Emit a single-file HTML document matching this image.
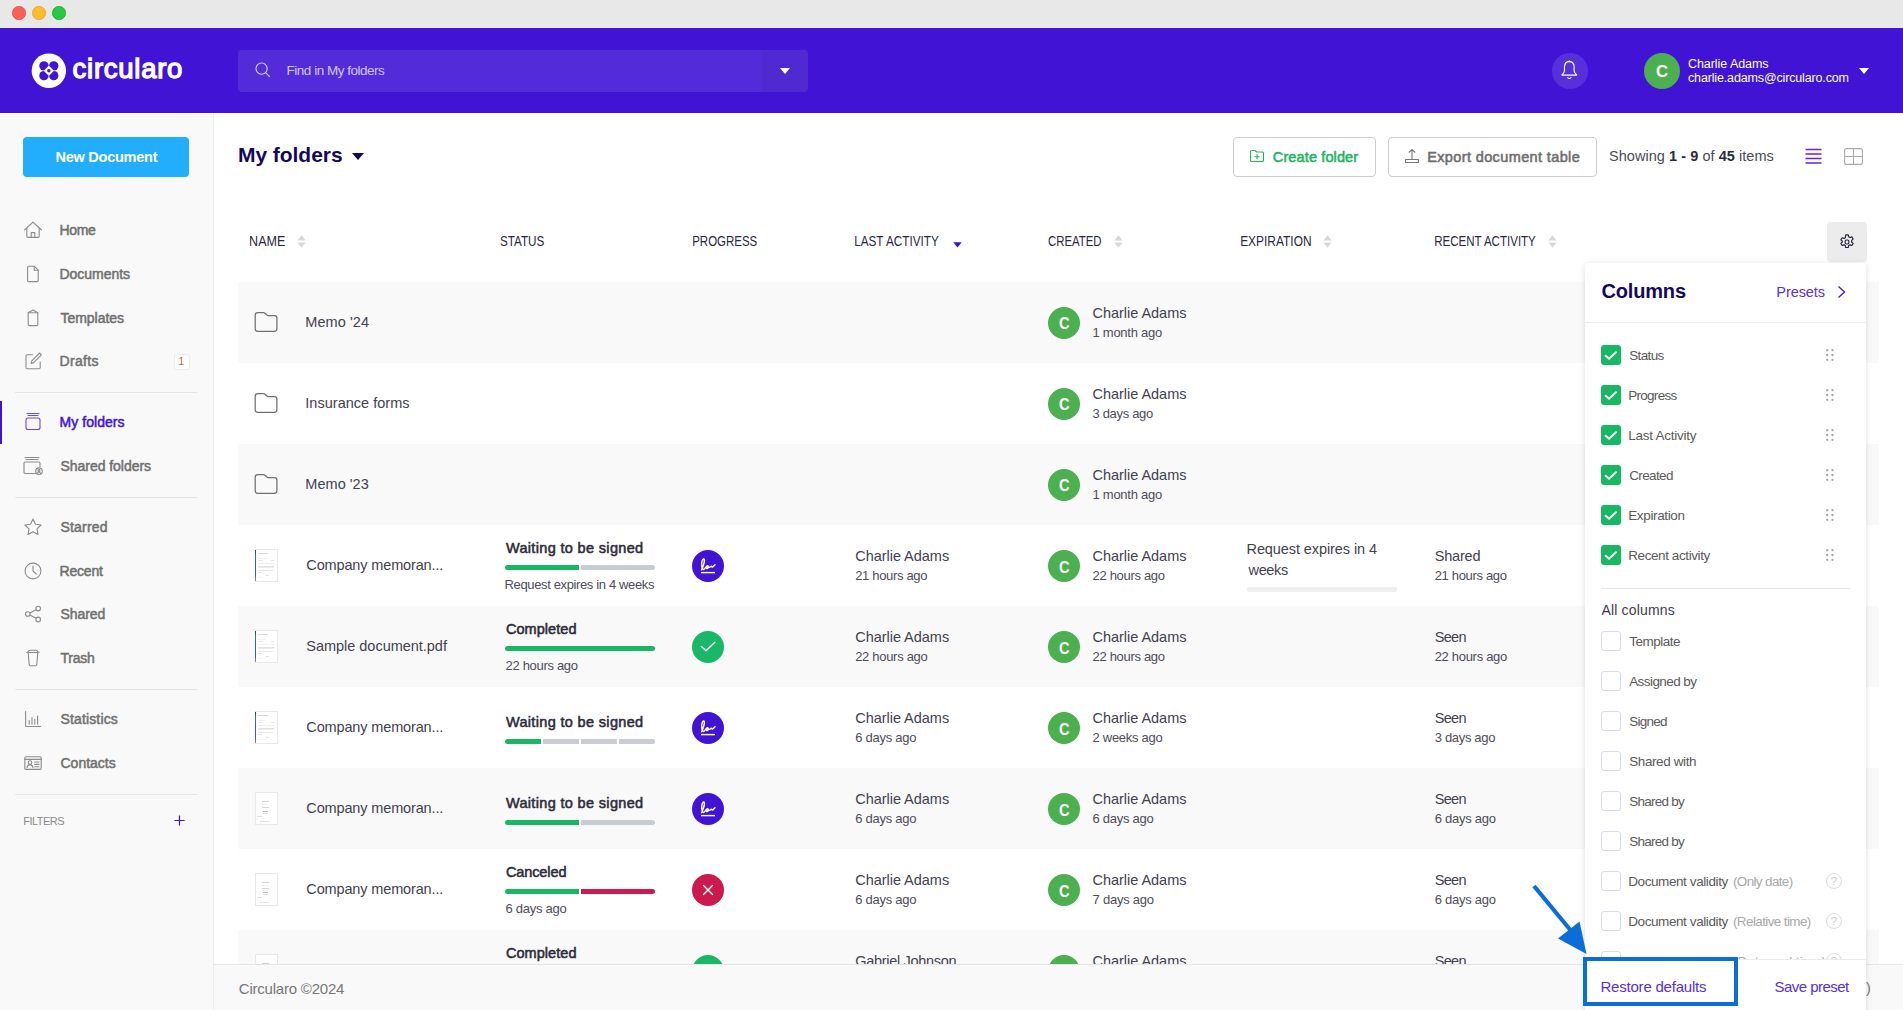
<!DOCTYPE html>
<html><head><meta charset="utf-8"><style>
html,body{margin:0;padding:0;width:1903px;height:1010px;overflow:hidden;background:#fff;}
body{position:relative;font-family:"Liberation Sans", sans-serif;}
.r{position:absolute;}
.t{position:absolute;white-space:nowrap;}
</style></head><body>
<div class="r" style="left:0px;top:0px;width:1903px;height:28px;background:#e8e8e8;"></div>
<div class="r" style="left:12.3px;top:6.1px;width:13.6px;height:13.6px;box-sizing:border-box;border:0.6px solid #e9534d;border-radius:50%;background:#fe5f57;"></div>
<div class="r" style="left:32.300000000000004px;top:6.1px;width:13.6px;height:13.6px;box-sizing:border-box;border:0.6px solid #e8aa2a;border-radius:50%;background:#febc2e;"></div>
<div class="r" style="left:52.300000000000004px;top:6.1px;width:13.6px;height:13.6px;box-sizing:border-box;border:0.6px solid #22b13a;border-radius:50%;background:#28c840;"></div>
<div class="r" style="left:0px;top:28px;width:1903px;height:85px;background:#4114d5;"></div>
<svg class="r" style="left:28px;top:50px" width="42" height="42" viewBox="28 50 42 42"><circle cx="48.85" cy="70.75" r="17.2" fill="#fff"/><g fill="#4114d5"><path d="M48.65 65.85 A4.7 4.7 0 1 0 43.95 70.55 Z"/><path d="M49.05 65.85 A4.7 4.7 0 1 1 53.75 70.55 Z"/><path d="M48.65 75.65 A4.7 4.7 0 1 1 43.95 70.95 Z"/><path d="M49.05 75.65 A4.7 4.7 0 1 0 53.75 70.95 Z"/></g><circle cx="48.85" cy="70.75" r="1.75" fill="#4114d5"/></svg>
<div class="t" style="left:72.55px;top:54.92px;font-size:27.5px;line-height:27.5px;color:#fff;font-weight:400;letter-spacing:0.735px;-webkit-text-stroke:1.3px #fff;">circularo</div>
<div class="r" style="left:238px;top:50px;width:570px;height:42px;background:rgba(255,255,255,0.10);border-radius:4px;"></div>
<div class="r" style="left:762px;top:50px;width:46px;height:42px;background:rgba(0,0,0,0.035);border-radius:0 4px 4px 0;"></div>
<svg class="r" style="left:255px;top:62px" width="16" height="16" viewBox="0 0 16 16">
<circle cx="6.6" cy="6.6" r="5.6" fill="none" stroke="#dcd0ff" stroke-width="1.1"/>
<line x1="10.6" y1="10.6" x2="14.8" y2="14.8" stroke="#dcd0ff" stroke-width="1.1"/></svg>
<div class="t" style="left:286.60px;top:63.77px;font-size:13.5px;line-height:13.5px;color:rgba(236,228,255,0.85);font-weight:400;letter-spacing:-0.493px;">Find in My folders</div>
<svg class="r" style="left:780px;top:68px" width="10" height="6" viewBox="0 0 10 6"><path d="M0 0H10L5 6Z" fill="#fff"/></svg>
<div class="r" style="left:1552px;top:53px;width:36px;height:36px;border-radius:50%;background:rgba(255,255,255,0.12);"></div>
<svg class="r" style="left:1552px;top:53px" width="36" height="36" viewBox="1552 53 36 36" fill="none" stroke="#fff" stroke-width="1.1" stroke-linejoin="round" stroke-linecap="round">
<path d="M1569.3 61.6C1566.2 61.6 1564.5 64 1564.5 67V70.8C1564.5 72.4 1563.2 73.6 1561.9 75.1H1576.7C1575.4 73.6 1574.1 72.4 1574.1 70.8V67C1574.1 64 1572.4 61.6 1569.3 61.6Z"/>
<path d="M1569.3 60.7V61.6"/><path d="M1567.6 77.7Q1569.3 79.3 1571 77.7"/></svg>
<div class="r" style="left:1644px;top:53px;width:36px;height:36px;border-radius:50%;background:#4caf50;"></div>
<div class="t" style="left:1656.10px;top:63.11px;font-size:17px;line-height:17px;color:#fff;font-weight:700;letter-spacing:0.000px;transform:scaleX(0.9833);transform-origin:0.00px 0;">C</div>
<div class="t" style="left:1688.00px;top:58.02px;font-size:12.5px;line-height:12.5px;color:#fff;font-weight:400;letter-spacing:-0.061px;">Charlie Adams</div>
<div class="t" style="left:1688.00px;top:71.62px;font-size:12.5px;line-height:12.5px;color:#fff;font-weight:400;letter-spacing:-0.147px;">charlie.adams@circularo.com</div>
<svg class="r" style="left:1859px;top:68px" width="10" height="6" viewBox="0 0 10 6"><path d="M0 0H10L5 6Z" fill="#fff"/></svg>
<div class="r" style="left:0px;top:113px;width:213px;height:897px;background:#f9f9f9;"></div>
<div class="r" style="left:213px;top:113px;width:1px;height:897px;background:#ececec;"></div>
<div class="r" style="left:23px;top:137px;width:166px;height:40px;background:#22aefd;border-radius:4px;"></div>
<div class="t" style="left:55.40px;top:149.73px;font-size:14.5px;line-height:14.5px;color:#fff;font-weight:700;letter-spacing:-0.237px;">New Document</div>
<svg class="r" style="left:23px;top:220px" width="20" height="20" viewBox="0 0 20 20" fill="none" stroke="#8c8c8c" stroke-width="1.1" stroke-linecap="round" stroke-linejoin="round"><path d="M1.5 10L10 2.2 18.5 10"/><path d="M3.8 8.2v8c0 .7.5 1.2 1.2 1.2h10c.7 0 1.2-.5 1.2-1.2v-8"/><path d="M8.2 17.4v-4.8h3.6v4.8"/></svg>
<div class="t" style="left:59.50px;top:223.15px;font-size:14px;line-height:14px;color:#707070;font-weight:400;letter-spacing:-0.353px;-webkit-text-stroke:0.5px #707070;">Home</div>
<svg class="r" style="left:23px;top:264px" width="20" height="20" viewBox="0 0 20 20" fill="none" stroke="#8c8c8c" stroke-width="1.1" stroke-linecap="round" stroke-linejoin="round"><path d="M5.8 2.2h5.4l4 4v10.2c0 .7-.5 1.2-1.2 1.2H5.8c-.7 0-1.2-.5-1.2-1.2V3.4c0-.7.5-1.2 1.2-1.2z"/><path d="M11.2 2.2v4h4"/></svg>
<div class="t" style="left:59.50px;top:267.15px;font-size:14px;line-height:14px;color:#707070;font-weight:400;letter-spacing:-0.038px;-webkit-text-stroke:0.5px #707070;">Documents</div>
<svg class="r" style="left:23px;top:308px" width="20" height="20" viewBox="0 0 20 20" fill="none" stroke="#8c8c8c" stroke-width="1.1" stroke-linecap="round" stroke-linejoin="round"><path d="M5.2 4.8L10 2l4.8 2.8v11.6c0 .7-.5 1.2-1.2 1.2H6.4c-.7 0-1.2-.5-1.2-1.2z"/><path d="M5.2 4.8h9.6"/></svg>
<div class="t" style="left:60.50px;top:311.15px;font-size:14px;line-height:14px;color:#707070;font-weight:400;letter-spacing:-0.038px;-webkit-text-stroke:0.5px #707070;">Templates</div>
<svg class="r" style="left:23px;top:351px" width="20" height="20" viewBox="0 0 20 20" fill="none" stroke="#8c8c8c" stroke-width="1.1" stroke-linecap="round" stroke-linejoin="round"><path d="M9.5 3.8H4.2c-.7 0-1.2.5-1.2 1.2v11.6c0 .7.5 1.2 1.2 1.2H16c.7 0 1.2-.5 1.2-1.2V11"/><path d="M16.6 2l1.8 1.8-7.8 7.8-2.6.8.8-2.6z"/></svg>
<div class="t" style="left:59.50px;top:354.15px;font-size:14px;line-height:14px;color:#707070;font-weight:400;letter-spacing:0.332px;-webkit-text-stroke:0.5px #707070;">Drafts</div>
<svg class="r" style="left:23px;top:412px" width="20" height="20" viewBox="0 0 20 20" fill="none" stroke="#6a45e4" stroke-width="1.1" stroke-linecap="round" stroke-linejoin="round"><rect x="3" y="6" width="14" height="11.5" rx="2"/><path d="M5 3.5h10M4 1.5h12"/></svg>
<div class="t" style="left:59.50px;top:415.15px;font-size:14px;line-height:14px;color:#4114d5;font-weight:400;letter-spacing:0.048px;-webkit-text-stroke:0.5px #4114d5;">My folders</div>
<svg class="r" style="left:23px;top:456px" width="20" height="20" viewBox="0 0 20 20" fill="none" stroke="#8c8c8c" stroke-width="1.1" stroke-linecap="round" stroke-linejoin="round"><path d="M12.5 17.5H2.2c-.7 0-1.2-.5-1.2-1.2V7.2C1 6.5 1.5 6 2.2 6h13.6c.7 0 1.2.5 1.2 1.2v3.5"/><path d="M3 3.5h12M2 1.5h14"/><circle cx="16" cy="15.2" r="3.3"/><circle cx="16" cy="14.4" r="1"/><path d="M14.2 17.4c.5-.9 1.1-1.3 1.8-1.3s1.3.4 1.8 1.3"/></svg>
<div class="t" style="left:60.50px;top:459.15px;font-size:14px;line-height:14px;color:#707070;font-weight:400;letter-spacing:-0.043px;-webkit-text-stroke:0.5px #707070;">Shared folders</div>
<svg class="r" style="left:23px;top:517px" width="20" height="20" viewBox="0 0 20 20" fill="none" stroke="#8c8c8c" stroke-width="1.1" stroke-linecap="round" stroke-linejoin="round"><path d="M10 2l2.5 5.2 5.6.8-4.1 3.9 1 5.6L10 14.8 5 17.5l1-5.6L1.9 8l5.6-.8z"/></svg>
<div class="t" style="left:60.50px;top:520.15px;font-size:14px;line-height:14px;color:#707070;font-weight:400;letter-spacing:0.179px;-webkit-text-stroke:0.5px #707070;">Starred</div>
<svg class="r" style="left:23px;top:561px" width="20" height="20" viewBox="0 0 20 20" fill="none" stroke="#8c8c8c" stroke-width="1.1" stroke-linecap="round" stroke-linejoin="round"><circle cx="10" cy="10" r="7.9"/><path d="M10 5v5l3.2 3"/></svg>
<div class="t" style="left:59.50px;top:564.15px;font-size:14px;line-height:14px;color:#707070;font-weight:400;letter-spacing:-0.194px;-webkit-text-stroke:0.5px #707070;">Recent</div>
<svg class="r" style="left:23px;top:604px" width="20" height="20" viewBox="0 0 20 20" fill="none" stroke="#8c8c8c" stroke-width="1.1" stroke-linecap="round" stroke-linejoin="round"><circle cx="15.2" cy="4.6" r="2.3"/><circle cx="15.2" cy="15.4" r="2.3"/><circle cx="4.8" cy="10" r="2.3"/><path d="M6.9 8.9l6.2-3.2M6.9 11.1l6.2 3.2"/></svg>
<div class="t" style="left:60.50px;top:607.15px;font-size:14px;line-height:14px;color:#707070;font-weight:400;letter-spacing:-0.052px;-webkit-text-stroke:0.5px #707070;">Shared</div>
<svg class="r" style="left:23px;top:648px" width="20" height="20" viewBox="0 0 20 20" fill="none" stroke="#8c8c8c" stroke-width="1.1" stroke-linecap="round" stroke-linejoin="round"><path d="M3.8 4.5h12.4"/><path d="M5 4.5c0-1.2 1-2.2 2.2-2.2h5.6c1.2 0 2.2 1 2.2 2.2"/><path d="M5.2 4.5l1 12.2c.1.6.5 1 1.1 1h5.4c.6 0 1-.4 1.1-1l1-12.2"/></svg>
<div class="t" style="left:60.50px;top:651.15px;font-size:14px;line-height:14px;color:#707070;font-weight:400;letter-spacing:-0.245px;-webkit-text-stroke:0.5px #707070;">Trash</div>
<svg class="r" style="left:23px;top:709px" width="20" height="20" viewBox="0 0 20 20" fill="none" stroke="#8c8c8c" stroke-width="1.1" stroke-linecap="round" stroke-linejoin="round"><path d="M2.6 2.5v15h15"/><path d="M6.2 15.2v-4M9 15.2V8.5M11.8 15.2v-5M14.6 15.2V7"/></svg>
<div class="t" style="left:60.50px;top:712.15px;font-size:14px;line-height:14px;color:#707070;font-weight:400;letter-spacing:0.143px;-webkit-text-stroke:0.5px #707070;">Statistics</div>
<svg class="r" style="left:23px;top:753px" width="20" height="20" viewBox="0 0 20 20" fill="none" stroke="#8c8c8c" stroke-width="1.1" stroke-linecap="round" stroke-linejoin="round"><rect x="1.8" y="3.8" width="16.4" height="12.6" rx="1.2"/><path d="M1.8 6.4h16.4"/><circle cx="7" cy="9.6" r="1.8"/><path d="M4 14.6c.4-2 1.6-3 3-3s2.6 1 3 3"/><path d="M11.6 9h4.4M11.6 11.4h4.4M11.6 13.8h4.4"/></svg>
<div class="t" style="left:60.50px;top:756.15px;font-size:14px;line-height:14px;color:#707070;font-weight:400;letter-spacing:-0.007px;-webkit-text-stroke:0.5px #707070;">Contacts</div>
<div class="r" style="left:0px;top:401px;width:2px;height:43px;background:#4114d5;"></div>
<div class="r" style="left:174px;top:354px;width:14px;height:14px;border:1px solid #ececec;border-radius:3px;background:#fff;"></div>
<div class="t" style="left:178.50px;top:357.04px;font-size:10px;line-height:10px;color:#b0623a;font-weight:400;letter-spacing:0.000px;">1</div>
<div class="r" style="left:15px;top:392px;width:182px;height:1px;background:#e6e6e6;"></div>
<div class="r" style="left:15px;top:497px;width:182px;height:1px;background:#e6e6e6;"></div>
<div class="r" style="left:15px;top:689px;width:182px;height:1px;background:#e6e6e6;"></div>
<div class="r" style="left:15px;top:794px;width:182px;height:1px;background:#e6e6e6;"></div>
<div class="t" style="left:23.20px;top:815.69px;font-size:11px;line-height:11px;color:#8a8a8a;font-weight:400;letter-spacing:-0.513px;">FILTERS</div>
<svg class="r" style="left:174px;top:815px" width="11" height="11" viewBox="0 0 11 11"><path d="M5.5 0.5v10M0.5 5.5h10" stroke="#4114d5" stroke-width="1.2"/></svg>
<div class="t" style="left:238.00px;top:144.22px;font-size:21px;line-height:21px;color:#14085e;font-weight:700;letter-spacing:-0.049px;">My folders</div>
<svg class="r" style="left:352px;top:153px" width="12" height="7" viewBox="0 0 12 7"><path d="M0 0H12L6 7Z" fill="#14085e"/></svg>
<div class="r" style="left:1233px;top:137px;width:141px;height:38px;border:1px solid #cdcdcd;border-radius:4px;"></div>
<svg class="r" style="left:1249px;top:149px" width="16" height="14" viewBox="0 0 16 14" fill="none" stroke="#23b35f" stroke-width="1.1" stroke-linejoin="round">
<path d="M1.5 2.5c0-.6.4-1 1-1h3.5l1.5 1.5h6c.6 0 1 .4 1 1v7.5c0 .6-.4 1-1 1h-11c-.6 0-1-.4-1-1z"/><path d="M8 5.2v5M5.5 7.7h5"/></svg>
<div class="t" style="left:1272.80px;top:149.73px;font-size:14.5px;line-height:14.5px;color:#23b35f;font-weight:400;letter-spacing:0.126px;-webkit-text-stroke:0.55px #23b35f;">Create folder</div>
<div class="r" style="left:1388px;top:137px;width:207px;height:38px;border:1px solid #cdcdcd;border-radius:4px;"></div>
<svg class="r" style="left:1404px;top:148px" width="16" height="16" viewBox="0 0 16 16" fill="none" stroke="#777" stroke-width="1.1" stroke-linejoin="round">
<path d="M8 11V1.5M4.8 4.5L8 1.5l3.2 3"/><path d="M1.5 11.5h13v3h-13z"/></svg>
<div class="t" style="left:1427.20px;top:149.73px;font-size:14.5px;line-height:14.5px;color:#6e6e6e;font-weight:400;letter-spacing:0.374px;-webkit-text-stroke:0.55px #6e6e6e;">Export document table</div>
<div class="t" style="left:1609.00px;top:149.33px;font-size:14.5px;line-height:14.5px;color:#4a4a58;font-weight:400;letter-spacing:0.050px;">Showing <b style="color:#2a2a3c">1 - 9</b> of <b style="color:#2a2a3c">45</b> items</div>
<svg class="r" style="left:1805px;top:148px" width="17" height="17" viewBox="0 0 17 17" stroke="#6a1fe6" stroke-width="1.6"><path d="M0.5 1.5h16M0.5 6h16M0.5 10.5h16M0.5 15h16"/></svg>
<svg class="r" style="left:1844px;top:148px" width="19" height="17" viewBox="0 0 19 17" fill="none" stroke="#aaa" stroke-width="1.1"><rect x="0.6" y="0.6" width="17.8" height="15.8" rx="2"/><path d="M9.5 0.6v15.8M0.6 8.5h17.8"/></svg>
<div class="t" style="left:249.00px;top:234.45px;font-size:14px;line-height:14px;color:#2b2740;font-weight:400;letter-spacing:0.000px;transform:scaleX(0.8949);transform-origin:1.00px 0;">NAME</div>
<svg class="r" style="left:296.5px;top:234.5px" width="9" height="13" viewBox="0 0 9 13" fill="#d9d9d9"><path d="M4.5 0.3L8.7 5.6H0.3Z"/><path d="M0.3 7.5H8.7L4.5 12.7Z"/></svg>
<div class="t" style="left:499.80px;top:234.45px;font-size:14px;line-height:14px;color:#2b2740;font-weight:400;letter-spacing:0.000px;transform:scaleX(0.8332);transform-origin:0.00px 0;">STATUS</div>
<div class="t" style="left:691.60px;top:234.45px;font-size:14px;line-height:14px;color:#2b2740;font-weight:400;letter-spacing:0.000px;transform:scaleX(0.8204);transform-origin:1.00px 0;">PROGRESS</div>
<div class="t" style="left:854.20px;top:234.45px;font-size:14px;line-height:14px;color:#2b2740;font-weight:400;letter-spacing:0.000px;transform:scaleX(0.8388);transform-origin:1.00px 0;">LAST ACTIVITY</div>
<svg class="r" style="left:952.5px;top:241.5px" width="9" height="6" viewBox="0 0 9 6"><path d="M0.3 0.3H8.7L4.5 5.6Z" fill="#3a10d5"/></svg>
<div class="t" style="left:1048.40px;top:234.45px;font-size:14px;line-height:14px;color:#2b2740;font-weight:400;letter-spacing:0.000px;transform:scaleX(0.8122);transform-origin:0.00px 0;">CREATED</div>
<svg class="r" style="left:1114.3px;top:234.5px" width="9" height="13" viewBox="0 0 9 13" fill="#d9d9d9"><path d="M4.5 0.3L8.7 5.6H0.3Z"/><path d="M0.3 7.5H8.7L4.5 12.7Z"/></svg>
<div class="t" style="left:1240.40px;top:234.45px;font-size:14px;line-height:14px;color:#2b2740;font-weight:400;letter-spacing:0.000px;transform:scaleX(0.8525);transform-origin:1.00px 0;">EXPIRATION</div>
<svg class="r" style="left:1323.2px;top:234.5px" width="9" height="13" viewBox="0 0 9 13" fill="#d9d9d9"><path d="M4.5 0.3L8.7 5.6H0.3Z"/><path d="M0.3 7.5H8.7L4.5 12.7Z"/></svg>
<div class="t" style="left:1434.00px;top:234.45px;font-size:14px;line-height:14px;color:#2b2740;font-weight:400;letter-spacing:0.000px;transform:scaleX(0.8234);transform-origin:1.00px 0;">RECENT ACTIVITY</div>
<svg class="r" style="left:1548.0px;top:234.5px" width="9" height="13" viewBox="0 0 9 13" fill="#d9d9d9"><path d="M4.5 0.3L8.7 5.6H0.3Z"/><path d="M0.3 7.5H8.7L4.5 12.7Z"/></svg>
<div class="r" style="left:1827px;top:222px;width:40px;height:40px;background:#ececec;border-radius:4px;"></div>
<svg class="r" style="left:1838px;top:233px" width="18" height="18" viewBox="0 0 24 24" fill="none" stroke="#24223a" stroke-width="1.5" stroke-linejoin="round">
<path d="M10.3 2.5h3.4l.5 2.6 1.8 1 2.5-.9 1.7 2.9-2 1.8v2.1l2 1.8-1.7 2.9-2.5-.9-1.8 1-.5 2.6h-3.4l-.5-2.6-1.8-1-2.5.9-1.7-2.9 2-1.8V11l-2-1.8 1.7-2.9 2.5.9 1.8-1z"/><rect x="9.6" y="9.4" width="4.8" height="5.2" rx="1.6"/></svg>
<div class="r" style="left:238px;top:282px;width:1641px;height:81px;background:#f9f9f9;"></div>
<div class="r" style="left:238px;top:363px;width:1641px;height:81px;background:#ffffff;"></div>
<div class="r" style="left:238px;top:444px;width:1641px;height:81px;background:#f9f9f9;"></div>
<div class="r" style="left:238px;top:525px;width:1641px;height:81px;background:#ffffff;"></div>
<div class="r" style="left:238px;top:606px;width:1641px;height:81px;background:#f9f9f9;"></div>
<div class="r" style="left:238px;top:687px;width:1641px;height:81px;background:#ffffff;"></div>
<div class="r" style="left:238px;top:768px;width:1641px;height:81px;background:#f9f9f9;"></div>
<div class="r" style="left:238px;top:849px;width:1641px;height:81px;background:#ffffff;"></div>
<div class="r" style="left:238px;top:930px;width:1641px;height:34px;background:#f9f9f9;"></div>
<svg class="r" style="left:254px;top:311px" width="24" height="22" viewBox="0 0 24 22" fill="none" stroke="#707070" stroke-width="1.25" stroke-linejoin="round">
<path d="M1.2 17.8V4Q1.2 1.5 3.7 1.5H9.5C10.8 1.5 11.4 2.2 12.2 3.3 12.9 4.2 13.4 4.7 14.5 4.7H20.4Q22.9 4.7 22.9 7.2V17.8Q22.9 20.3 20.4 20.3H3.7Q1.2 20.3 1.2 17.8Z"/></svg>
<div class="t" style="left:305.30px;top:314.83px;font-size:14.5px;line-height:14.5px;color:#43414f;font-weight:400;letter-spacing:0.065px;">Memo '24</div>
<div class="r" style="left:1048px;top:306.5px;width:32px;height:32px;border-radius:50%;background:#4caf50;"></div><div class="t" style="left:1058.90px;top:315.03px;font-size:16.5px;line-height:16.5px;color:#fff;font-weight:700;letter-spacing:0.000px;transform:scaleX(0.8833);transform-origin:0.00px 0;">C</div>
<div class="t" style="left:1092.50px;top:305.73px;font-size:14.5px;line-height:14.5px;color:#43414f;font-weight:400;letter-spacing:-0.029px;">Charlie Adams</div><div class="t" style="left:1092.50px;top:326.30px;font-size:13px;line-height:13px;color:#4e4c5a;font-weight:400;letter-spacing:-0.264px;">1 month ago</div>
<svg class="r" style="left:254px;top:392px" width="24" height="22" viewBox="0 0 24 22" fill="none" stroke="#707070" stroke-width="1.25" stroke-linejoin="round">
<path d="M1.2 17.8V4Q1.2 1.5 3.7 1.5H9.5C10.8 1.5 11.4 2.2 12.2 3.3 12.9 4.2 13.4 4.7 14.5 4.7H20.4Q22.9 4.7 22.9 7.2V17.8Q22.9 20.3 20.4 20.3H3.7Q1.2 20.3 1.2 17.8Z"/></svg>
<div class="t" style="left:305.30px;top:395.83px;font-size:14.5px;line-height:14.5px;color:#43414f;font-weight:400;letter-spacing:0.021px;">Insurance forms</div>
<div class="r" style="left:1048px;top:387.5px;width:32px;height:32px;border-radius:50%;background:#4caf50;"></div><div class="t" style="left:1058.90px;top:396.03px;font-size:16.5px;line-height:16.5px;color:#fff;font-weight:700;letter-spacing:0.000px;transform:scaleX(0.8833);transform-origin:0.00px 0;">C</div>
<div class="t" style="left:1092.50px;top:386.73px;font-size:14.5px;line-height:14.5px;color:#43414f;font-weight:400;letter-spacing:-0.029px;">Charlie Adams</div><div class="t" style="left:1092.50px;top:407.30px;font-size:13px;line-height:13px;color:#4e4c5a;font-weight:400;letter-spacing:-0.319px;">3 days ago</div>
<svg class="r" style="left:254px;top:473px" width="24" height="22" viewBox="0 0 24 22" fill="none" stroke="#707070" stroke-width="1.25" stroke-linejoin="round">
<path d="M1.2 17.8V4Q1.2 1.5 3.7 1.5H9.5C10.8 1.5 11.4 2.2 12.2 3.3 12.9 4.2 13.4 4.7 14.5 4.7H20.4Q22.9 4.7 22.9 7.2V17.8Q22.9 20.3 20.4 20.3H3.7Q1.2 20.3 1.2 17.8Z"/></svg>
<div class="t" style="left:305.30px;top:476.83px;font-size:14.5px;line-height:14.5px;color:#43414f;font-weight:400;letter-spacing:0.036px;">Memo '23</div>
<div class="r" style="left:1048px;top:468.5px;width:32px;height:32px;border-radius:50%;background:#4caf50;"></div><div class="t" style="left:1058.90px;top:477.03px;font-size:16.5px;line-height:16.5px;color:#fff;font-weight:700;letter-spacing:0.000px;transform:scaleX(0.8833);transform-origin:0.00px 0;">C</div>
<div class="t" style="left:1092.50px;top:467.73px;font-size:14.5px;line-height:14.5px;color:#43414f;font-weight:400;letter-spacing:-0.029px;">Charlie Adams</div><div class="t" style="left:1092.50px;top:488.30px;font-size:13px;line-height:13px;color:#4e4c5a;font-weight:400;letter-spacing:-0.264px;">1 month ago</div>
<div class="r" style="left:254.5px;top:549px;width:23px;height:32.5px;background:#fff;border:1px solid #e8e8e8;box-sizing:border-box;"></div><div class="r" style="left:255px;top:549.5px;width:1.3px;height:31.5px;background:linear-gradient(#3a3a3a,#2a8a6a 18%,#3a55e0 40%,#3a55e0 82%,#b88a40);"></div><div class="r" style="left:258.0px;top:553.2px;width:10px;height:1px;background:#d8d8d8;"></div><div class="r" style="left:258.0px;top:557.8px;width:8px;height:1px;background:#f0f0f0;"></div><div class="r" style="left:258.0px;top:560px;width:5px;height:1px;background:#e8e8e8;"></div><div class="r" style="left:270.5px;top:560px;width:3px;height:1px;background:#e8e8e8;"></div><div class="r" style="left:258.0px;top:562.5px;width:16px;height:1px;background:#f0f0f0;"></div><div class="r" style="left:258.0px;top:565.8px;width:16px;height:1px;background:#e2e2e2;"></div><div class="r" style="left:258.0px;top:567.2px;width:15px;height:1px;background:#ececec;"></div><div class="r" style="left:258.0px;top:569.8px;width:15px;height:1px;background:#e8e8e8;"></div><div class="r" style="left:258.0px;top:572px;width:4px;height:1px;background:#e4e4e4;"></div><div class="r" style="left:265.5px;top:575.2px;width:3px;height:1px;background:#e4e4e4;"></div><div class="r" style="left:258.0px;top:576.5px;width:3px;height:1px;background:#f0f0f0;"></div>
<div class="t" style="left:306.30px;top:557.83px;font-size:14.5px;line-height:14.5px;color:#43414f;font-weight:400;letter-spacing:-0.140px;">Company memoran...</div>
<div class="t" style="left:505.90px;top:541.23px;font-size:14.5px;line-height:14.5px;color:#2e2c3b;font-weight:400;letter-spacing:0.338px;-webkit-text-stroke:0.55px #2e2c3b;">Waiting to be signed</div>
<div class="r" style="left:505.0px;top:565px;width:74.0px;height:5px;background:#19b664;border-radius:3px 0 0 3px;"></div><div class="r" style="left:581.0px;top:565px;width:74.0px;height:5px;background:#c9ccd1;border-radius:0 3px 3px 0;"></div>
<div class="t" style="left:504.50px;top:578.00px;font-size:13px;line-height:13px;color:#4e4c5a;font-weight:400;letter-spacing:-0.363px;">Request expires in 4 weeks</div>
<div class="r" style="left:692px;top:550px;width:32px;height:32px;border-radius:50%;background:#4114d5;"></div><svg class="r" style="left:692px;top:550px" width="32" height="32" viewBox="0 0 32 32" fill="none" stroke="#fff" stroke-width="1.45" stroke-linecap="round" stroke-linejoin="round">
<path d="M9.6 19.8C10.6 17.5 12.4 13 12.4 10.4 12.4 8.8 11.4 8.6 10.8 9.6 9.8 11.2 9.6 15.5 10.2 18 10.6 19.6 11.6 19.8 12.6 18.8 13.6 17.6 14.4 15.6 15.6 15.8 16.8 16 16.4 18.4 15.2 18.6 14.2 18.8 14.6 17.2 15.8 17.2 17 17.2 17.6 17.6 18.4 17 19 16.6 19.2 15.8 19.6 16.4 20 17 20.4 17.4 21.2 16.6L23 14.8"/>
<path d="M9 22.6H23" stroke-width="1.4" stroke-linecap="butt"/></svg>
<div class="t" style="left:855.20px;top:548.73px;font-size:14.5px;line-height:14.5px;color:#43414f;font-weight:400;letter-spacing:-0.029px;">Charlie Adams</div><div class="t" style="left:855.20px;top:569.30px;font-size:13px;line-height:13px;color:#4e4c5a;font-weight:400;letter-spacing:-0.333px;">21 hours ago</div>
<div class="r" style="left:1048px;top:550px;width:32px;height:32px;border-radius:50%;background:#4caf50;"></div><div class="t" style="left:1058.90px;top:558.53px;font-size:16.5px;line-height:16.5px;color:#fff;font-weight:700;letter-spacing:0.000px;transform:scaleX(0.8833);transform-origin:0.00px 0;">C</div>
<div class="t" style="left:1092.50px;top:548.73px;font-size:14.5px;line-height:14.5px;color:#43414f;font-weight:400;letter-spacing:-0.029px;">Charlie Adams</div><div class="t" style="left:1092.50px;top:569.30px;font-size:13px;line-height:13px;color:#4e4c5a;font-weight:400;letter-spacing:-0.306px;">22 hours ago</div>
<div class="t" style="left:1434.70px;top:548.73px;font-size:14.5px;line-height:14.5px;color:#43414f;font-weight:400;letter-spacing:-0.179px;">Shared</div><div class="t" style="left:1434.70px;top:569.30px;font-size:13px;line-height:13px;color:#4e4c5a;font-weight:400;letter-spacing:-0.333px;">21 hours ago</div>
<div class="t" style="left:1246.50px;top:541.93px;font-size:14.5px;line-height:14.5px;color:#43414f;font-weight:400;letter-spacing:-0.085px;">Request expires in 4</div>
<div class="t" style="left:1248.50px;top:562.53px;font-size:14.5px;line-height:14.5px;color:#43414f;font-weight:400;letter-spacing:-0.337px;">weeks</div>
<div class="r" style="left:1247px;top:587px;width:150px;height:4.5px;background:#efefef;border-radius:2px;"></div>
<div class="r" style="left:254.5px;top:630px;width:23px;height:32.5px;background:#fff;border:1px solid #e8e8e8;box-sizing:border-box;"></div><div class="r" style="left:255px;top:630.5px;width:1.3px;height:31.5px;background:linear-gradient(#3a3a3a,#2a8a6a 18%,#3a55e0 40%,#3a55e0 82%,#b88a40);"></div><div class="r" style="left:258.0px;top:634.2px;width:10px;height:1px;background:#d8d8d8;"></div><div class="r" style="left:258.0px;top:638.8px;width:8px;height:1px;background:#f0f0f0;"></div><div class="r" style="left:258.0px;top:641px;width:5px;height:1px;background:#e8e8e8;"></div><div class="r" style="left:270.5px;top:641px;width:3px;height:1px;background:#e8e8e8;"></div><div class="r" style="left:258.0px;top:643.5px;width:16px;height:1px;background:#f0f0f0;"></div><div class="r" style="left:258.0px;top:646.8px;width:16px;height:1px;background:#e2e2e2;"></div><div class="r" style="left:258.0px;top:648.2px;width:15px;height:1px;background:#ececec;"></div><div class="r" style="left:258.0px;top:650.8px;width:15px;height:1px;background:#e8e8e8;"></div><div class="r" style="left:258.0px;top:653px;width:4px;height:1px;background:#e4e4e4;"></div><div class="r" style="left:265.5px;top:656.2px;width:3px;height:1px;background:#e4e4e4;"></div><div class="r" style="left:258.0px;top:657.5px;width:3px;height:1px;background:#f0f0f0;"></div>
<div class="t" style="left:306.30px;top:638.83px;font-size:14.5px;line-height:14.5px;color:#43414f;font-weight:400;letter-spacing:-0.024px;">Sample document.pdf</div>
<div class="t" style="left:505.90px;top:622.23px;font-size:14.5px;line-height:14.5px;color:#2e2c3b;font-weight:400;letter-spacing:0.055px;-webkit-text-stroke:0.55px #2e2c3b;">Completed</div>
<div class="r" style="left:505.0px;top:646px;width:150.0px;height:5px;background:#19b664;border-radius:3px;"></div>
<div class="t" style="left:505.50px;top:659.00px;font-size:13px;line-height:13px;color:#4e4c5a;font-weight:400;letter-spacing:-0.306px;">22 hours ago</div>
<div class="r" style="left:692px;top:631px;width:32px;height:32px;border-radius:50%;background:#19b866;"></div><svg class="r" style="left:698px;top:637px" width="20" height="20" viewBox="0 0 20 20" fill="none" stroke="#fff" stroke-width="1.4" stroke-linecap="round" stroke-linejoin="round"><path d="M3.4 9.4L8 13.7 16.9 5.2"/></svg>
<div class="t" style="left:855.20px;top:629.73px;font-size:14.5px;line-height:14.5px;color:#43414f;font-weight:400;letter-spacing:-0.029px;">Charlie Adams</div><div class="t" style="left:855.20px;top:650.30px;font-size:13px;line-height:13px;color:#4e4c5a;font-weight:400;letter-spacing:-0.306px;">22 hours ago</div>
<div class="r" style="left:1048px;top:631px;width:32px;height:32px;border-radius:50%;background:#4caf50;"></div><div class="t" style="left:1058.90px;top:639.53px;font-size:16.5px;line-height:16.5px;color:#fff;font-weight:700;letter-spacing:0.000px;transform:scaleX(0.8833);transform-origin:0.00px 0;">C</div>
<div class="t" style="left:1092.50px;top:629.73px;font-size:14.5px;line-height:14.5px;color:#43414f;font-weight:400;letter-spacing:-0.029px;">Charlie Adams</div><div class="t" style="left:1092.50px;top:650.30px;font-size:13px;line-height:13px;color:#4e4c5a;font-weight:400;letter-spacing:-0.306px;">22 hours ago</div>
<div class="t" style="left:1434.70px;top:629.73px;font-size:14.5px;line-height:14.5px;color:#43414f;font-weight:400;letter-spacing:-0.700px;">Seen</div><div class="t" style="left:1434.70px;top:650.30px;font-size:13px;line-height:13px;color:#4e4c5a;font-weight:400;letter-spacing:-0.306px;">22 hours ago</div>
<div class="r" style="left:254.5px;top:711px;width:23px;height:32.5px;background:#fff;border:1px solid #e8e8e8;box-sizing:border-box;"></div><div class="r" style="left:255px;top:711.5px;width:1.3px;height:31.5px;background:linear-gradient(#3a3a3a,#2a8a6a 18%,#3a55e0 40%,#3a55e0 82%,#b88a40);"></div><div class="r" style="left:258.0px;top:715.2px;width:10px;height:1px;background:#d8d8d8;"></div><div class="r" style="left:258.0px;top:719.8px;width:8px;height:1px;background:#f0f0f0;"></div><div class="r" style="left:258.0px;top:722px;width:5px;height:1px;background:#e8e8e8;"></div><div class="r" style="left:270.5px;top:722px;width:3px;height:1px;background:#e8e8e8;"></div><div class="r" style="left:258.0px;top:724.5px;width:16px;height:1px;background:#f0f0f0;"></div><div class="r" style="left:258.0px;top:727.8px;width:16px;height:1px;background:#e2e2e2;"></div><div class="r" style="left:258.0px;top:729.2px;width:15px;height:1px;background:#ececec;"></div><div class="r" style="left:258.0px;top:731.8px;width:15px;height:1px;background:#e8e8e8;"></div><div class="r" style="left:258.0px;top:734px;width:4px;height:1px;background:#e4e4e4;"></div><div class="r" style="left:265.5px;top:737.2px;width:3px;height:1px;background:#e4e4e4;"></div><div class="r" style="left:258.0px;top:738.5px;width:3px;height:1px;background:#f0f0f0;"></div>
<div class="t" style="left:306.30px;top:719.83px;font-size:14.5px;line-height:14.5px;color:#43414f;font-weight:400;letter-spacing:-0.140px;">Company memoran...</div>
<div class="t" style="left:505.90px;top:714.73px;font-size:14.5px;line-height:14.5px;color:#2e2c3b;font-weight:400;letter-spacing:0.338px;-webkit-text-stroke:0.55px #2e2c3b;">Waiting to be signed</div>
<div class="r" style="left:505.0px;top:738.5px;width:36.0px;height:5px;background:#19b664;border-radius:3px 0 0 3px;"></div><div class="r" style="left:543.0px;top:738.5px;width:36.0px;height:5px;background:#c9ccd1;"></div><div class="r" style="left:581.0px;top:738.5px;width:36.0px;height:5px;background:#c9ccd1;"></div><div class="r" style="left:619.0px;top:738.5px;width:36.0px;height:5px;background:#c9ccd1;border-radius:0 3px 3px 0;"></div>
<div class="r" style="left:692px;top:712px;width:32px;height:32px;border-radius:50%;background:#4114d5;"></div><svg class="r" style="left:692px;top:712px" width="32" height="32" viewBox="0 0 32 32" fill="none" stroke="#fff" stroke-width="1.45" stroke-linecap="round" stroke-linejoin="round">
<path d="M9.6 19.8C10.6 17.5 12.4 13 12.4 10.4 12.4 8.8 11.4 8.6 10.8 9.6 9.8 11.2 9.6 15.5 10.2 18 10.6 19.6 11.6 19.8 12.6 18.8 13.6 17.6 14.4 15.6 15.6 15.8 16.8 16 16.4 18.4 15.2 18.6 14.2 18.8 14.6 17.2 15.8 17.2 17 17.2 17.6 17.6 18.4 17 19 16.6 19.2 15.8 19.6 16.4 20 17 20.4 17.4 21.2 16.6L23 14.8"/>
<path d="M9 22.6H23" stroke-width="1.4" stroke-linecap="butt"/></svg>
<div class="t" style="left:855.20px;top:710.73px;font-size:14.5px;line-height:14.5px;color:#43414f;font-weight:400;letter-spacing:-0.029px;">Charlie Adams</div><div class="t" style="left:855.20px;top:731.30px;font-size:13px;line-height:13px;color:#4e4c5a;font-weight:400;letter-spacing:-0.264px;">6 days ago</div>
<div class="r" style="left:1048px;top:712px;width:32px;height:32px;border-radius:50%;background:#4caf50;"></div><div class="t" style="left:1058.90px;top:720.53px;font-size:16.5px;line-height:16.5px;color:#fff;font-weight:700;letter-spacing:0.000px;transform:scaleX(0.8833);transform-origin:0.00px 0;">C</div>
<div class="t" style="left:1092.50px;top:710.73px;font-size:14.5px;line-height:14.5px;color:#43414f;font-weight:400;letter-spacing:-0.029px;">Charlie Adams</div><div class="t" style="left:1092.50px;top:731.30px;font-size:13px;line-height:13px;color:#4e4c5a;font-weight:400;letter-spacing:-0.276px;">2 weeks ago</div>
<div class="t" style="left:1434.70px;top:710.73px;font-size:14.5px;line-height:14.5px;color:#43414f;font-weight:400;letter-spacing:-0.700px;">Seen</div><div class="t" style="left:1434.70px;top:731.30px;font-size:13px;line-height:13px;color:#4e4c5a;font-weight:400;letter-spacing:-0.319px;">3 days ago</div>
<div class="r" style="left:254.5px;top:792px;width:23px;height:32.5px;background:#fff;border:1px solid #e8e8e8;box-sizing:border-box;"></div><div class="r" style="left:261.5px;top:801px;width:7.5px;height:1px;background:#d2d2d2;"></div><div class="r" style="left:262.0px;top:804px;width:6px;height:1px;background:#efefef;"></div><div class="r" style="left:261.5px;top:807px;width:7px;height:1px;background:#d6d6d6;"></div><div class="r" style="left:263.0px;top:811px;width:5px;height:1px;background:#bdbdbd;"></div><div class="r" style="left:263.0px;top:813.2px;width:5px;height:1px;background:#dedede;"></div><div class="r" style="left:257.0px;top:816px;width:5px;height:1px;background:#e2e2e2;"></div><div class="r" style="left:260.0px;top:821px;width:9px;height:1px;background:#e2e2e2;"></div>
<div class="t" style="left:306.30px;top:800.83px;font-size:14.5px;line-height:14.5px;color:#43414f;font-weight:400;letter-spacing:-0.140px;">Company memoran...</div>
<div class="t" style="left:505.90px;top:795.73px;font-size:14.5px;line-height:14.5px;color:#2e2c3b;font-weight:400;letter-spacing:0.338px;-webkit-text-stroke:0.55px #2e2c3b;">Waiting to be signed</div>
<div class="r" style="left:505.0px;top:819.5px;width:74.0px;height:5px;background:#19b664;border-radius:3px 0 0 3px;"></div><div class="r" style="left:581.0px;top:819.5px;width:74.0px;height:5px;background:#c9ccd1;border-radius:0 3px 3px 0;"></div>
<div class="r" style="left:692px;top:793px;width:32px;height:32px;border-radius:50%;background:#4114d5;"></div><svg class="r" style="left:692px;top:793px" width="32" height="32" viewBox="0 0 32 32" fill="none" stroke="#fff" stroke-width="1.45" stroke-linecap="round" stroke-linejoin="round">
<path d="M9.6 19.8C10.6 17.5 12.4 13 12.4 10.4 12.4 8.8 11.4 8.6 10.8 9.6 9.8 11.2 9.6 15.5 10.2 18 10.6 19.6 11.6 19.8 12.6 18.8 13.6 17.6 14.4 15.6 15.6 15.8 16.8 16 16.4 18.4 15.2 18.6 14.2 18.8 14.6 17.2 15.8 17.2 17 17.2 17.6 17.6 18.4 17 19 16.6 19.2 15.8 19.6 16.4 20 17 20.4 17.4 21.2 16.6L23 14.8"/>
<path d="M9 22.6H23" stroke-width="1.4" stroke-linecap="butt"/></svg>
<div class="t" style="left:855.20px;top:791.73px;font-size:14.5px;line-height:14.5px;color:#43414f;font-weight:400;letter-spacing:-0.029px;">Charlie Adams</div><div class="t" style="left:855.20px;top:812.30px;font-size:13px;line-height:13px;color:#4e4c5a;font-weight:400;letter-spacing:-0.264px;">6 days ago</div>
<div class="r" style="left:1048px;top:793px;width:32px;height:32px;border-radius:50%;background:#4caf50;"></div><div class="t" style="left:1058.90px;top:801.53px;font-size:16.5px;line-height:16.5px;color:#fff;font-weight:700;letter-spacing:0.000px;transform:scaleX(0.8833);transform-origin:0.00px 0;">C</div>
<div class="t" style="left:1092.50px;top:791.73px;font-size:14.5px;line-height:14.5px;color:#43414f;font-weight:400;letter-spacing:-0.029px;">Charlie Adams</div><div class="t" style="left:1092.50px;top:812.30px;font-size:13px;line-height:13px;color:#4e4c5a;font-weight:400;letter-spacing:-0.264px;">6 days ago</div>
<div class="t" style="left:1434.70px;top:791.73px;font-size:14.5px;line-height:14.5px;color:#43414f;font-weight:400;letter-spacing:-0.700px;">Seen</div><div class="t" style="left:1434.70px;top:812.30px;font-size:13px;line-height:13px;color:#4e4c5a;font-weight:400;letter-spacing:-0.264px;">6 days ago</div>
<div class="r" style="left:254.5px;top:873px;width:23px;height:32.5px;background:#fff;border:1px solid #e8e8e8;box-sizing:border-box;"></div><div class="r" style="left:261.5px;top:882px;width:7.5px;height:1px;background:#d2d2d2;"></div><div class="r" style="left:262.0px;top:885px;width:6px;height:1px;background:#efefef;"></div><div class="r" style="left:261.5px;top:888px;width:7px;height:1px;background:#d6d6d6;"></div><div class="r" style="left:263.0px;top:892px;width:5px;height:1px;background:#bdbdbd;"></div><div class="r" style="left:263.0px;top:894.2px;width:5px;height:1px;background:#dedede;"></div><div class="r" style="left:257.0px;top:897px;width:5px;height:1px;background:#e2e2e2;"></div><div class="r" style="left:260.0px;top:902px;width:9px;height:1px;background:#e2e2e2;"></div>
<div class="t" style="left:306.30px;top:881.83px;font-size:14.5px;line-height:14.5px;color:#43414f;font-weight:400;letter-spacing:-0.140px;">Company memoran...</div>
<div class="t" style="left:505.90px;top:865.23px;font-size:14.5px;line-height:14.5px;color:#2e2c3b;font-weight:400;letter-spacing:-0.100px;-webkit-text-stroke:0.55px #2e2c3b;">Canceled</div>
<div class="r" style="left:505.0px;top:889px;width:74.0px;height:5px;background:#19b664;border-radius:3px 0 0 3px;"></div><div class="r" style="left:581.0px;top:889px;width:74.0px;height:5px;background:#cc1a4f;border-radius:0 3px 3px 0;"></div>
<div class="t" style="left:505.50px;top:902.00px;font-size:13px;line-height:13px;color:#4e4c5a;font-weight:400;letter-spacing:-0.264px;">6 days ago</div>
<div class="r" style="left:692px;top:874px;width:32px;height:32px;border-radius:50%;background:#cc1a4f;"></div><svg class="r" style="left:698px;top:880px" width="20" height="20" viewBox="0 0 20 20" fill="none" stroke="#fff" stroke-width="1.4" stroke-linecap="round"><path d="M5.5 5.5l9 9M14.5 5.5l-9 9"/></svg>
<div class="t" style="left:855.20px;top:872.73px;font-size:14.5px;line-height:14.5px;color:#43414f;font-weight:400;letter-spacing:-0.029px;">Charlie Adams</div><div class="t" style="left:855.20px;top:893.30px;font-size:13px;line-height:13px;color:#4e4c5a;font-weight:400;letter-spacing:-0.264px;">6 days ago</div>
<div class="r" style="left:1048px;top:874px;width:32px;height:32px;border-radius:50%;background:#4caf50;"></div><div class="t" style="left:1058.90px;top:882.53px;font-size:16.5px;line-height:16.5px;color:#fff;font-weight:700;letter-spacing:0.000px;transform:scaleX(0.8833);transform-origin:0.00px 0;">C</div>
<div class="t" style="left:1092.50px;top:872.73px;font-size:14.5px;line-height:14.5px;color:#43414f;font-weight:400;letter-spacing:-0.029px;">Charlie Adams</div><div class="t" style="left:1092.50px;top:893.30px;font-size:13px;line-height:13px;color:#4e4c5a;font-weight:400;letter-spacing:-0.230px;">7 days ago</div>
<div class="t" style="left:1434.70px;top:872.73px;font-size:14.5px;line-height:14.5px;color:#43414f;font-weight:400;letter-spacing:-0.700px;">Seen</div><div class="t" style="left:1434.70px;top:893.30px;font-size:13px;line-height:13px;color:#4e4c5a;font-weight:400;letter-spacing:-0.264px;">6 days ago</div>
<div class="r" style="left:254.5px;top:954px;width:23px;height:32.5px;background:#fff;border:1px solid #e8e8e8;box-sizing:border-box;"></div><div class="r" style="left:261.5px;top:963px;width:7.5px;height:1px;background:#d2d2d2;"></div><div class="r" style="left:262.0px;top:966px;width:6px;height:1px;background:#efefef;"></div><div class="r" style="left:261.5px;top:969px;width:7px;height:1px;background:#d6d6d6;"></div><div class="r" style="left:263.0px;top:973px;width:5px;height:1px;background:#bdbdbd;"></div><div class="r" style="left:263.0px;top:975.2px;width:5px;height:1px;background:#dedede;"></div><div class="r" style="left:257.0px;top:978px;width:5px;height:1px;background:#e2e2e2;"></div><div class="r" style="left:260.0px;top:983px;width:9px;height:1px;background:#e2e2e2;"></div>
<div class="t" style="left:505.90px;top:946.23px;font-size:14.5px;line-height:14.5px;color:#2e2c3b;font-weight:400;letter-spacing:0.055px;-webkit-text-stroke:0.55px #2e2c3b;">Completed</div>
<div class="r" style="left:505.0px;top:970px;width:150.0px;height:5px;background:#19b664;border-radius:3px;"></div>
<div class="r" style="left:692px;top:955px;width:32px;height:32px;border-radius:50%;background:#19b866;"></div><svg class="r" style="left:698px;top:961px" width="20" height="20" viewBox="0 0 20 20" fill="none" stroke="#fff" stroke-width="1.4" stroke-linecap="round" stroke-linejoin="round"><path d="M3.4 9.4L8 13.7 16.9 5.2"/></svg>
<div class="t" style="left:855.20px;top:953.73px;font-size:14.5px;line-height:14.5px;color:#43414f;font-weight:400;letter-spacing:-0.302px;">Gabriel Johnson</div>
<div class="r" style="left:1048px;top:955px;width:32px;height:32px;border-radius:50%;background:#4caf50;"></div><div class="t" style="left:1058.90px;top:963.53px;font-size:16.5px;line-height:16.5px;color:#fff;font-weight:700;letter-spacing:0.000px;transform:scaleX(0.8833);transform-origin:0.00px 0;">C</div>
<div class="t" style="left:1092.50px;top:953.73px;font-size:14.5px;line-height:14.5px;color:#43414f;font-weight:400;letter-spacing:-0.029px;">Charlie Adams</div>
<div class="t" style="left:1434.70px;top:953.73px;font-size:14.5px;line-height:14.5px;color:#43414f;font-weight:400;letter-spacing:-0.700px;">Seen</div>
<div class="r" style="left:214px;top:964px;width:1689px;height:46px;background:#f9f9f9;"></div>
<div class="r" style="left:214px;top:963.5px;width:1689px;height:1px;background:#e6e6e6;"></div>
<div class="t" style="left:238.80px;top:981.40px;font-size:15px;line-height:15px;color:#777;font-weight:400;letter-spacing:-0.212px;">Circularo ©2024</div>
<div class="t" style="left:1866.00px;top:980.73px;font-size:14.5px;line-height:14.5px;color:#777;font-weight:400;letter-spacing:0.000px;">)</div>
<div class="r" style="left:1585px;top:263px;width:281px;height:760px;background:#fff;border-radius:4px;box-shadow:0 1px 6px rgba(0,0,0,0.13);"></div>
<div class="t" style="left:1601.40px;top:280.77px;font-size:20px;line-height:20px;color:#14085e;font-weight:700;letter-spacing:-0.156px;">Columns</div>
<div class="t" style="left:1776.30px;top:284.73px;font-size:14.5px;line-height:14.5px;color:#5530e0;font-weight:400;letter-spacing:-0.068px;">Presets</div>
<svg class="r" style="left:1837px;top:285px" width="9" height="14" viewBox="0 0 9 14" fill="none" stroke="#4114d5" stroke-width="1.3"><path d="M1.5 1.5L7.5 7l-6 5.5"/></svg>
<div class="r" style="left:1585px;top:322px;width:281px;height:1px;background:#ebebeb;"></div>
<div class="r" style="left:1601px;top:345px;width:20px;height:20px;background:#19b664;border-radius:3px;"></div>
<svg class="r" style="left:1601px;top:345px" width="20" height="20" viewBox="0 0 20 20" fill="none" stroke="#fff" stroke-width="1.9" stroke-linecap="round" stroke-linejoin="round"><path d="M4.6 10.8l3.4 3 7-6.6"/></svg>
<div class="t" style="left:1629.20px;top:348.97px;font-size:13.5px;line-height:13.5px;color:#5a5a5a;font-weight:400;letter-spacing:-0.644px;">Status</div>
<svg class="r" style="left:1826px;top:349px" width="8" height="12" viewBox="0 0 8 12" fill="#a2a2a2"><circle cx="1.2" cy="1.2" r="1.15"/><circle cx="6.4" cy="1.2" r="1.15"/><circle cx="1.2" cy="6" r="1.15"/><circle cx="6.4" cy="6" r="1.15"/><circle cx="1.2" cy="10.8" r="1.15"/><circle cx="6.4" cy="10.8" r="1.15"/></svg>
<div class="r" style="left:1601px;top:385px;width:20px;height:20px;background:#19b664;border-radius:3px;"></div>
<svg class="r" style="left:1601px;top:385px" width="20" height="20" viewBox="0 0 20 20" fill="none" stroke="#fff" stroke-width="1.9" stroke-linecap="round" stroke-linejoin="round"><path d="M4.6 10.8l3.4 3 7-6.6"/></svg>
<div class="t" style="left:1628.20px;top:388.97px;font-size:13.5px;line-height:13.5px;color:#5a5a5a;font-weight:400;letter-spacing:-0.710px;">Progress</div>
<svg class="r" style="left:1826px;top:389px" width="8" height="12" viewBox="0 0 8 12" fill="#a2a2a2"><circle cx="1.2" cy="1.2" r="1.15"/><circle cx="6.4" cy="1.2" r="1.15"/><circle cx="1.2" cy="6" r="1.15"/><circle cx="6.4" cy="6" r="1.15"/><circle cx="1.2" cy="10.8" r="1.15"/><circle cx="6.4" cy="10.8" r="1.15"/></svg>
<div class="r" style="left:1601px;top:425px;width:20px;height:20px;background:#19b664;border-radius:3px;"></div>
<svg class="r" style="left:1601px;top:425px" width="20" height="20" viewBox="0 0 20 20" fill="none" stroke="#fff" stroke-width="1.9" stroke-linecap="round" stroke-linejoin="round"><path d="M4.6 10.8l3.4 3 7-6.6"/></svg>
<div class="t" style="left:1628.20px;top:428.97px;font-size:13.5px;line-height:13.5px;color:#5a5a5a;font-weight:400;letter-spacing:-0.248px;">Last Activity</div>
<svg class="r" style="left:1826px;top:429px" width="8" height="12" viewBox="0 0 8 12" fill="#a2a2a2"><circle cx="1.2" cy="1.2" r="1.15"/><circle cx="6.4" cy="1.2" r="1.15"/><circle cx="1.2" cy="6" r="1.15"/><circle cx="6.4" cy="6" r="1.15"/><circle cx="1.2" cy="10.8" r="1.15"/><circle cx="6.4" cy="10.8" r="1.15"/></svg>
<div class="r" style="left:1601px;top:465px;width:20px;height:20px;background:#19b664;border-radius:3px;"></div>
<svg class="r" style="left:1601px;top:465px" width="20" height="20" viewBox="0 0 20 20" fill="none" stroke="#fff" stroke-width="1.9" stroke-linecap="round" stroke-linejoin="round"><path d="M4.6 10.8l3.4 3 7-6.6"/></svg>
<div class="t" style="left:1629.20px;top:468.97px;font-size:13.5px;line-height:13.5px;color:#5a5a5a;font-weight:400;letter-spacing:-0.637px;">Created</div>
<svg class="r" style="left:1826px;top:469px" width="8" height="12" viewBox="0 0 8 12" fill="#a2a2a2"><circle cx="1.2" cy="1.2" r="1.15"/><circle cx="6.4" cy="1.2" r="1.15"/><circle cx="1.2" cy="6" r="1.15"/><circle cx="6.4" cy="6" r="1.15"/><circle cx="1.2" cy="10.8" r="1.15"/><circle cx="6.4" cy="10.8" r="1.15"/></svg>
<div class="r" style="left:1601px;top:505px;width:20px;height:20px;background:#19b664;border-radius:3px;"></div>
<svg class="r" style="left:1601px;top:505px" width="20" height="20" viewBox="0 0 20 20" fill="none" stroke="#fff" stroke-width="1.9" stroke-linecap="round" stroke-linejoin="round"><path d="M4.6 10.8l3.4 3 7-6.6"/></svg>
<div class="t" style="left:1628.20px;top:508.97px;font-size:13.5px;line-height:13.5px;color:#5a5a5a;font-weight:400;letter-spacing:-0.358px;">Expiration</div>
<svg class="r" style="left:1826px;top:509px" width="8" height="12" viewBox="0 0 8 12" fill="#a2a2a2"><circle cx="1.2" cy="1.2" r="1.15"/><circle cx="6.4" cy="1.2" r="1.15"/><circle cx="1.2" cy="6" r="1.15"/><circle cx="6.4" cy="6" r="1.15"/><circle cx="1.2" cy="10.8" r="1.15"/><circle cx="6.4" cy="10.8" r="1.15"/></svg>
<div class="r" style="left:1601px;top:545px;width:20px;height:20px;background:#19b664;border-radius:3px;"></div>
<svg class="r" style="left:1601px;top:545px" width="20" height="20" viewBox="0 0 20 20" fill="none" stroke="#fff" stroke-width="1.9" stroke-linecap="round" stroke-linejoin="round"><path d="M4.6 10.8l3.4 3 7-6.6"/></svg>
<div class="t" style="left:1628.20px;top:548.97px;font-size:13.5px;line-height:13.5px;color:#5a5a5a;font-weight:400;letter-spacing:-0.409px;">Recent activity</div>
<svg class="r" style="left:1826px;top:549px" width="8" height="12" viewBox="0 0 8 12" fill="#a2a2a2"><circle cx="1.2" cy="1.2" r="1.15"/><circle cx="6.4" cy="1.2" r="1.15"/><circle cx="1.2" cy="6" r="1.15"/><circle cx="6.4" cy="6" r="1.15"/><circle cx="1.2" cy="10.8" r="1.15"/><circle cx="6.4" cy="10.8" r="1.15"/></svg>
<div class="r" style="left:1601px;top:588px;width:249px;height:1px;background:#e6e6e6;"></div>
<div class="t" style="left:1601.40px;top:602.95px;font-size:14px;line-height:14px;color:#3d3b4a;font-weight:400;letter-spacing:0.182px;">All columns</div>
<div class="r" style="left:1601px;top:631px;width:20px;height:20px;box-sizing:border-box;border:1px solid #dcd8ee;border-radius:3px;background:#fff;"></div>
<div class="t" style="left:1629.20px;top:634.97px;font-size:13.5px;line-height:13.5px;color:#5a5a5a;font-weight:400;letter-spacing:-0.496px;">Template</div>
<div class="r" style="left:1601px;top:671px;width:20px;height:20px;box-sizing:border-box;border:1px solid #dcd8ee;border-radius:3px;background:#fff;"></div>
<div class="t" style="left:1629.20px;top:674.97px;font-size:13.5px;line-height:13.5px;color:#5a5a5a;font-weight:400;letter-spacing:-0.579px;">Assigned by</div>
<div class="r" style="left:1601px;top:711px;width:20px;height:20px;box-sizing:border-box;border:1px solid #dcd8ee;border-radius:3px;background:#fff;"></div>
<div class="t" style="left:1629.20px;top:714.97px;font-size:13.5px;line-height:13.5px;color:#5a5a5a;font-weight:400;letter-spacing:-0.746px;">Signed</div>
<div class="r" style="left:1601px;top:751px;width:20px;height:20px;box-sizing:border-box;border:1px solid #dcd8ee;border-radius:3px;background:#fff;"></div>
<div class="t" style="left:1629.20px;top:754.97px;font-size:13.5px;line-height:13.5px;color:#5a5a5a;font-weight:400;letter-spacing:-0.398px;">Shared with</div>
<div class="r" style="left:1601px;top:791px;width:20px;height:20px;box-sizing:border-box;border:1px solid #dcd8ee;border-radius:3px;background:#fff;"></div>
<div class="t" style="left:1629.20px;top:794.97px;font-size:13.5px;line-height:13.5px;color:#5a5a5a;font-weight:400;letter-spacing:-0.749px;">Shared by</div>
<div class="r" style="left:1601px;top:831px;width:20px;height:20px;box-sizing:border-box;border:1px solid #dcd8ee;border-radius:3px;background:#fff;"></div>
<div class="t" style="left:1629.20px;top:834.97px;font-size:13.5px;line-height:13.5px;color:#5a5a5a;font-weight:400;letter-spacing:-0.749px;">Shared by</div>
<div class="r" style="left:1601px;top:871px;width:20px;height:20px;box-sizing:border-box;border:1px solid #dcd8ee;border-radius:3px;background:#fff;"></div>
<div class="t" style="left:1628.20px;top:874.97px;font-size:13.5px;line-height:13.5px;color:#5a5a5a;font-weight:400;letter-spacing:-0.406px;">Document validity</div>
<div class="t" style="left:1733.00px;top:874.97px;font-size:13.5px;line-height:13.5px;color:#a8a8a8;font-weight:400;letter-spacing:-0.658px;">(Only date)</div>
<div class="r" style="left:1826px;top:873px;width:16px;height:16px;box-sizing:border-box;border:1px solid #dcdcdc;border-radius:50%;"></div>
<div class="t" style="left:1830.80px;top:876.19px;font-size:11px;line-height:11px;color:#c8c8c8;font-weight:400;letter-spacing:0.000px;">?</div>
<div class="r" style="left:1601px;top:911px;width:20px;height:20px;box-sizing:border-box;border:1px solid #dcd8ee;border-radius:3px;background:#fff;"></div>
<div class="t" style="left:1628.20px;top:914.97px;font-size:13.5px;line-height:13.5px;color:#5a5a5a;font-weight:400;letter-spacing:-0.406px;">Document validity</div>
<div class="t" style="left:1733.00px;top:914.97px;font-size:13.5px;line-height:13.5px;color:#a8a8a8;font-weight:400;letter-spacing:-0.623px;">(Relative time)</div>
<div class="r" style="left:1826px;top:913px;width:16px;height:16px;box-sizing:border-box;border:1px solid #dcdcdc;border-radius:50%;"></div>
<div class="t" style="left:1830.80px;top:916.19px;font-size:11px;line-height:11px;color:#c8c8c8;font-weight:400;letter-spacing:0.000px;">?</div>
<div class="r" style="left:1601px;top:951px;width:20px;height:20px;box-sizing:border-box;border:1px solid #dcd8ee;border-radius:3px;background:#fff;"></div>
<div class="t" style="left:1628.20px;top:954.97px;font-size:13.5px;line-height:13.5px;color:#5a5a5a;font-weight:400;letter-spacing:-0.406px;">Document validity</div>
<div class="t" style="left:1733.00px;top:954.97px;font-size:13.5px;line-height:13.5px;color:#a8a8a8;font-weight:400;letter-spacing:0.000px;">(Date and time)</div>
<div class="r" style="left:1826px;top:953px;width:16px;height:16px;box-sizing:border-box;border:1px solid #dcdcdc;border-radius:50%;"></div>
<div class="t" style="left:1830.80px;top:956.19px;font-size:11px;line-height:11px;color:#c8c8c8;font-weight:400;letter-spacing:0.000px;">?</div>
<div class="r" style="left:1585px;top:959px;width:281px;height:60px;background:#fff;"></div>
<div class="r" style="left:1585px;top:959px;width:281px;height:1px;background:#ebebeb;"></div>
<div class="t" style="left:1600.50px;top:978.50px;font-size:15px;line-height:15px;color:#5530e0;font-weight:400;letter-spacing:-0.215px;">Restore defaults</div>
<div class="t" style="left:1774.50px;top:978.50px;font-size:15px;line-height:15px;color:#5530e0;font-weight:400;letter-spacing:-0.538px;">Save preset</div>
<div class="r" style="left:1583px;top:957px;width:154.5px;height:48.5px;box-sizing:border-box;border:4.5px solid #0a6ed6;"></div>
<svg class="r" style="left:1520px;top:870px" width="80" height="95" viewBox="0 0 80 95">
<line x1="14" y1="16" x2="52" y2="62" stroke="#0a6ed6" stroke-width="4.2"/>
<path d="M38 68.5L59.5 51.5L66.5 84Z" fill="#0a6ed6"/></svg>
</body></html>
